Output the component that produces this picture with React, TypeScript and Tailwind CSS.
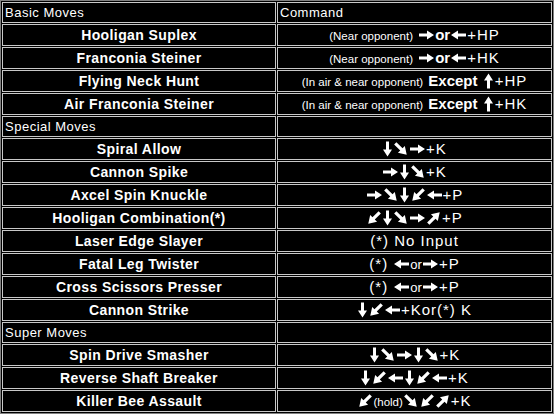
import React from "react";

type Dir = "R" | "L" | "U" | "D" | "DR" | "DL" | "UR" | "UL";

const ANG: Record<Dir, number> = { R: 0, DR: 45, D: 90, DL: 135, L: 180, UL: 225, U: 270, UR: 315 };
const WID: Record<Dir, number> = { R: 17, L: 17, U: 13, D: 11, DR: 16, DL: 16, UR: 16, UL: 16 };

function Arrow({ d }: { d: Dir }) {
  const w = WID[d];
  const diag = d.length === 2;
  const s = diag ? 1.08 : 1;
  return (
    <svg
      width={w}
      height={16}
      viewBox={`0 0 ${w} 16`}
      className="inline-block align-[-3px]"
      role="img"
      aria-label={d}
    >
      <g transform={`translate(${w / 2} 8) rotate(${ANG[d]}) scale(${s})`}>
        <polygon fill="#fff" points="-7.5,-1.5 0.5,-1.5 0.5,-4.5 7.5,0 0.5,4.5 0.5,1.5 -7.5,1.5" />
      </g>
    </svg>
  );
}

type Seg =
  | { t: "a"; d: Dir }
  | { t: "s"; v: string }
  | { t: "b"; v: string }
  | { t: "n"; v: string }
  | { t: "o"; v: string };

const A = (d: Dir): Seg => ({ t: "a", d });
const S = (v: string): Seg => ({ t: "s", v });
const B = (v: string): Seg => ({ t: "b", v });
const N = (v: string): Seg => ({ t: "n", v });
const O = (v: string): Seg => ({ t: "o", v });

type Row = { kind: "h"; name: string; cmd: string } | { kind: "m"; name: string; cmd: Seg[] };

const rows: Row[] = [
  { kind: "h", name: "Basic Moves", cmd: "Command" },
  { kind: "m", name: "Hooligan Suplex", cmd: [S("(Near opponent)"), N(" "), A("R"), B("or"), A("L"), N("+HP")] },
  { kind: "m", name: "Franconia Steiner", cmd: [S("(Near opponent)"), N(" "), A("R"), B("or"), A("L"), N("+HK")] },
  { kind: "m", name: "Flying Neck Hunt", cmd: [S("(In air & near opponent)"), N(" "), B("Except "), A("U"), N("+HP")] },
  { kind: "m", name: "Air Franconia Steiner", cmd: [S("(In air & near opponent)"), N(" "), B("Except "), A("U"), N("+HK")] },
  { kind: "h", name: "Special Moves", cmd: "" },
  { kind: "m", name: "Spiral Allow", cmd: [A("D"), A("DR"), A("R"), N("+K")] },
  { kind: "m", name: "Cannon Spike", cmd: [A("R"), A("D"), A("DR"), N("+K")] },
  { kind: "m", name: "Axcel Spin Knuckle", cmd: [A("R"), A("DR"), A("D"), A("DL"), A("L"), N("+P")] },
  { kind: "m", name: "Hooligan Combination(*)", cmd: [A("DL"), A("D"), A("DR"), A("R"), A("UR"), N("+P")] },
  { kind: "m", name: "Laser Edge Slayer", cmd: [N("(*) No Input")] },
  { kind: "m", name: "Fatal Leg Twister", cmd: [N("(*) "), A("L"), O("or"), A("R"), N("+P")] },
  { kind: "m", name: "Cross Scissors Presser", cmd: [N("(*) "), A("L"), O("or"), A("R"), N("+P")] },
  { kind: "m", name: "Cannon Strike", cmd: [A("D"), A("DL"), A("L"), N("+Kor(*) K")] },
  { kind: "h", name: "Super Moves", cmd: "" },
  { kind: "m", name: "Spin Drive Smasher", cmd: [A("D"), A("DR"), A("R"), A("D"), A("DR"), N("+K")] },
  { kind: "m", name: "Reverse Shaft Breaker", cmd: [A("D"), A("DL"), A("L"), A("D"), A("DL"), A("L"), N("+K")] },
  { kind: "m", name: "Killer Bee Assault", cmd: [A("DL"), S("(hold)"), A("DR"), A("DL"), A("UR"), N("+K")] },
];

function SegView({ s }: { s: Seg }) {
  switch (s.t) {
    case "a":
      return <Arrow d={s.d} />;
    case "s":
      return <span className="text-[11.5px] whitespace-pre">{s.v}</span>;
    case "b":
      return <span className="text-[15px] font-bold whitespace-pre">{s.v}</span>;
    case "o":
      return <span className="text-[13px] whitespace-pre">{s.v}</span>;
    default:
      return <span className="text-[15px] tracking-[1px] whitespace-pre">{s.v}</span>;
  }
}

export default function App() {
  return (
    <div className="w-[554px] h-[414px] bg-black border border-[#808080] p-[1px] flex flex-col gap-[1px] font-['Liberation_Sans',Arial,sans-serif] text-white">
      {rows.map((r, i) => (
        <div key={i} className={`grid grid-cols-[274px_275px] gap-[1px] ${r.kind === "h" ? "h-[21px]" : "h-[22px]"}`}>
          {r.kind === "h" ? (
            <>
              <div className="border border-[#c8c8c8] flex items-center pl-[2px] text-[13px] tracking-[0.5px] leading-none">{r.name}</div>
              <div className="border border-[#c8c8c8] flex items-center pl-[2px] text-[13px] tracking-[0.5px] leading-none">{r.cmd}</div>
            </>
          ) : (
            <>
              <div className="border border-[#c8c8c8] flex items-center justify-center text-[14px] font-bold tracking-[0.4px] leading-none">{r.name}</div>
              <div className="border border-[#c8c8c8] flex items-center justify-center leading-none">
                <span className="whitespace-nowrap">
                  {r.cmd.map((s, j) => (
                    <SegView key={j} s={s} />
                  ))}
                </span>
              </div>
            </>
          )}
        </div>
      ))}
    </div>
  );
}
